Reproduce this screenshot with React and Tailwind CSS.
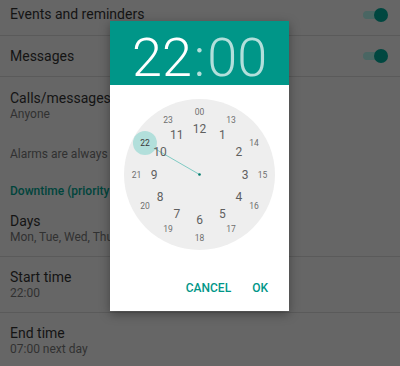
import React from "react";

const FONT = { fontFamily: "Roboto, 'Noto Sans', sans-serif" };

function Toggle() {
  return (
    <div className="relative mr-[12px] h-[14px] w-[25px]">
      <div className="absolute left-0 top-[3px] h-[8px] w-[22px] rounded-full bg-[#4a6663]" />
      <div className="absolute right-0 top-0 h-[14px] w-[14px] rounded-full bg-[#004740]" />
    </div>
  );
}

function Row({ title, sub, toggle, h = "h-[56px]" }) {
  return (
    <div className={`flex ${h} items-center justify-between border-b border-[#5a5a5a] pl-[10px]`}>
      <div className="flex flex-col whitespace-nowrap">
        <span className="text-[14px] leading-[17px] text-[#141414]">{title}</span>
        {sub && <span className="text-[12px] leading-[15px] text-[#313131]">{sub}</span>}
      </div>
      {toggle && <Toggle />}
    </div>
  );
}

function ClockFace() {
  const c = 75.5;
  const inner = [12, 1, 2, 3, 4, 5, 6, 7, 8, 9, 10, 11];
  const outer = ["00", 13, 14, 15, 16, 17, 18, 19, 20, 21, 22, 23];
  const pos = (i, r) => {
    const a = (i * 30 * Math.PI) / 180;
    return [c + r * Math.sin(a), c - r * Math.cos(a)];
  };
  const [sx, sy] = pos(10, 63);
  return (
    <svg width="151" height="151" viewBox="0 0 151 151" style={FONT}>
      <circle cx={c} cy={c} r="75.5" fill="#eeeeee" />
      <line x1={c} y1={c} x2={sx} y2={sy} stroke="#80cbc4" strokeWidth="1" />
      <circle cx={sx} cy={sy} r="12" fill="#b2dfdb" />
      <circle cx={c} cy={c} r="1.3" fill="#00796b" />
      {inner.map((n, i) => {
        const [x, y] = pos(i, 45.5);
        return (
          <text key={"i" + n} x={x} y={y + 4.2} textAnchor="middle" fontSize="12" fill="#5f5f5f">
            {n}
          </text>
        );
      })}
      {outer.map((n, i) => {
        const [x, y] = pos(i, 63);
        return (
          <text key={"o" + n} x={x} y={y + 3} textAnchor="middle" fontSize="8.5" fill={i === 10 ? "#3a3a3a" : "#6f6f6f"}>
            {n}
          </text>
        );
      })}
    </svg>
  );
}

export default function App() {
  return (
    <div className="relative h-[366px] w-[400px] overflow-hidden bg-[#666666]" style={FONT}>
      <div className="-mt-[6px] flex flex-col">
        <Row title="Events and reminders" toggle h="h-[42px]" />
        <Row title="Messages" toggle h="h-[41px]" />
        <div className="flex h-[56px] items-center pl-[10px] pt-[2px]">
          <div className="flex flex-col whitespace-nowrap">
            <span className="text-[14px] leading-[17px] text-[#141414]">Calls/messages from</span>
            <span className="text-[12px] leading-[15px] text-[#313131]">Anyone</span>
          </div>
        </div>
        <div className="flex h-[42px] items-center whitespace-nowrap pl-[10px] text-[12px] text-[#313131]">
          Alarms are always priority interruptions
        </div>
        <div className="flex h-[26px] items-end whitespace-nowrap pb-[3px] pl-[10px] text-[12px] leading-[14px] font-medium text-[#00443c]">
          Downtime (priority interruptions only)
        </div>
        <Row title="Days" sub="Mon, Tue, Wed, Thu, Sun" />
        <Row title="Start time" sub="22:00" />
        <Row title="End time" sub="07:00 next day" />
      </div>

      <div className="absolute left-[110px] top-[21px] flex h-[290px] w-[179px] flex-col bg-white shadow-[0_3px_10px_rgba(0,0,0,0.35)]">
        <div className="flex h-[64px] justify-center bg-[#009688] pt-[10px]">
          <div className="text-[54px] font-light leading-[54px]">
            <span className="text-white">22</span>
            <span className="mx-[2px] text-[#b2dfdb]">:</span>
            <span className="text-[#b2dfdb]">00</span>
          </div>
        </div>
        <div className="mt-[14px] flex justify-center">
          <ClockFace />
        </div>
        <div className="mt-[20px] flex h-[36px] items-center justify-end gap-[21px] pr-[21px] text-[12px] font-medium text-[#009688]">
          <span>CANCEL</span>
          <span>OK</span>
        </div>
      </div>
    </div>
  );
}
